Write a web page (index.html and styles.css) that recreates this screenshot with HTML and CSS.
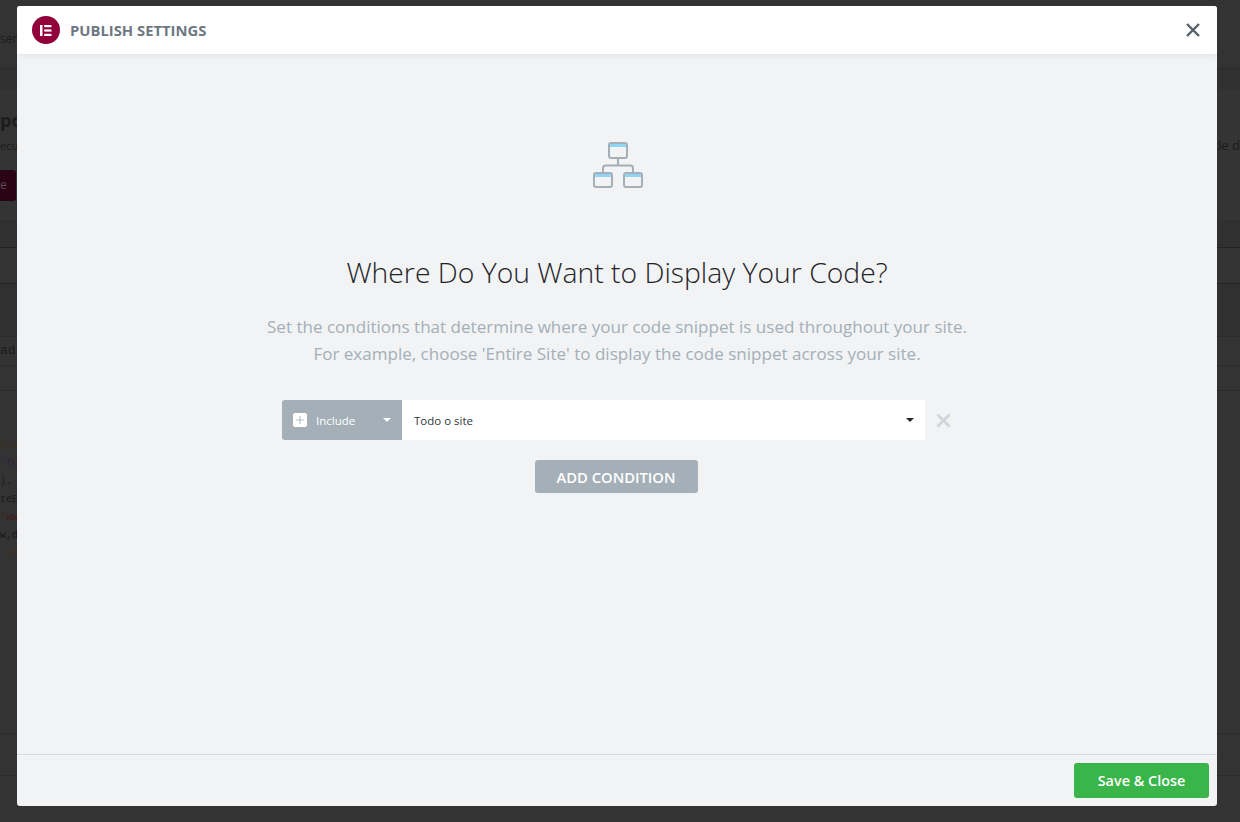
FILE: index.html
```html
<!DOCTYPE html>
<html lang="en">
<head>
  <meta charset="UTF-8" />
  <meta name="viewport" content="width=device-width, initial-scale=1.0" />
  <title>Publish Settings</title>
  <link rel="stylesheet" href="styles.css">
</head>
<body>
  <!-- dimmed page behind the modal -->
  <div class="page">
    <div class="row row-top"><span>ser</span></div>
    <div class="row row-band"></div>
    <div class="row row-intro">
      <div class="intro-left">
        <div class="intro-title">po</div>
        <div class="intro-text">ecu</div>
        <div class="intro-btn">e</div>
      </div>
      <div class="intro-right">de d</div>
    </div>
    <div class="row row-tab"></div>
    <div class="row row-plain"></div>
    <div class="row row-gap"></div>
    <div class="row row-input"><span>ad:</span></div>
    <div class="row row-small"></div>
    <div class="row row-code">
      <div class="code-line c-brown">gle</div>
      <div class="code-line c-purple">'fu</div>
      <div class="code-line c-plain">).</div>
      <div class="code-line c-plain">teE</div>
      <div class="code-line c-red">'ww</div>
      <div class="code-line c-dark">w,d</div>
      <div class="code-line c-brown">&nbsp;Go</div>
    </div>
    <div class="row row-foot"></div>
    <div class="row row-end"></div>
  </div>

  <div class="modal">
    <header class="modal-header">
      <div class="brand">
        <svg class="logo" viewBox="0 0 28 28" width="28" height="28">
          <circle cx="14" cy="14" r="14" fill="#92003b" />
          <rect x="8" y="9" width="2.5" height="11" fill="#fff" />
          <rect x="12.2" y="9" width="7.3" height="2.2" fill="#fff" />
          <rect x="12.2" y="13.4" width="7.3" height="2.2" fill="#fff" />
          <rect x="12.2" y="17.8" width="7.3" height="2.2" fill="#fff" />
        </svg>
        <span class="modal-title">PUBLISH SETTINGS</span>
      </div>
      <svg class="close" viewBox="0 0 14 14" width="14" height="14">
        <path d="M1 1 L13 13 M13 1 L1 13" stroke="#556068" stroke-width="2.400" fill="none" />
      </svg>
    </header>

    <main class="modal-body">
      <svg class="hero-icon" viewBox="0 0 50 46" width="50" height="46">
        <path d="M25 17 V23 M10 30 V26 Q10 23.500 12.500 23.500 H37.500 Q40 23.500 40 26 V30" stroke="#a4afb7" stroke-width="2" fill="none" />
        <rect x="16" y="1" width="18" height="15" rx="2" fill="#f1f3f5" stroke="#a4afb7" stroke-width="2" />
        <rect x="17" y="2" width="16" height="3" fill="#8fd6f4" />
        <rect x="1" y="31" width="18" height="14" rx="2" fill="#f1f3f5" stroke="#a4afb7" stroke-width="2" />
        <rect x="2" y="32" width="16" height="3" fill="#8fd6f4" />
        <rect x="31" y="31" width="18" height="14" rx="2" fill="#f1f3f5" stroke="#a4afb7" stroke-width="2" />
        <rect x="32" y="32" width="16" height="3" fill="#8fd6f4" />
      </svg>

      <h2 class="heading">Where Do You Want to Display Your Code?</h2>
      <p class="description">
        Set the conditions that determine where your code snippet is used throughout your site.<br>
        For example, choose 'Entire Site' to display the code snippet across your site.
      </p>

      <div class="condition">
        <div class="condition-type">
          <span class="plus-box">
            <svg viewBox="0 0 14 14" width="14" height="14">
              <path d="M7 3 V11 M3 7 H11" stroke="#b9c3cb" stroke-width="1.200" fill="none" />
            </svg>
          </span>
          <span class="type-label">Include</span>
          <span class="caret caret-white"></span>
        </div>
        <div class="condition-value">
          <span>Todo o site</span>
          <span class="caret caret-dark"></span>
        </div>
        <svg class="remove" viewBox="0 0 15 15" width="15" height="15">
          <path d="M1.500 1.500 L13.500 13.500 M13.500 1.500 L1.500 13.500" stroke="#cfd5da" stroke-width="2.800" fill="none" />
        </svg>
      </div>

      <button class="add-btn">ADD CONDITION</button>
    </main>

    <footer class="modal-footer">
      <button class="save-btn">Save &amp; Close</button>
    </footer>
  </div>
</body>
</html>
```

FILE: styles.css
```css
* {
  box-sizing: border-box;
}

body {
  margin: 0;
  height: 822px;
  overflow: hidden;
  background: #333;
  font-family: 'Open Sans', 'Noto Sans', sans-serif;
}

/* page behind the modal */
.page {
  height: 822px;
  display: flex;
  flex-direction: column;
  color: #1c1c1c;
  font-size: 12px;
}

.row {
  border-bottom: 1px solid #2b2b2b;
  flex: none;
}

.row-top {
  height: 69px;
  padding-top: 29px;
  line-height: 20px;
}

.row-band {
  height: 20px;
  background: #303030;
  border-bottom: none;
}

.row-intro {
  height: 131px;
  background: #343434;
  border-bottom: none;
  display: flex;
  justify-content: space-between;
}

.intro-title {
  margin-top: 21px;
  font-size: 18px;
  font-weight: 700;
  line-height: 20px;
}

.intro-text {
  margin-top: 7px;
  font-size: 11px;
  line-height: 18px;
}

.intro-btn {
  margin-top: 15px;
  width: 16px;
  height: 31px;
  background: #2a0314;
  border-radius: 0 3px 3px 0;
  color: #5a4a50;
  font-size: 12px;
  line-height: 30px;
}

.intro-right {
  margin-top: 47px;
  font-size: 13px;
  line-height: 18px;
}

.row-tab {
  height: 28px;
  background: #303030;
  border-bottom-color: #232323;
}

.row-plain {
  height: 36px;
  border-bottom-color: #232323;
}

.row-gap {
  height: 53px;
  background: #303030;
}

.row-input {
  height: 29px;
  line-height: 28px;
  font-size: 13px;
  font-family: 'Liberation Mono', monospace;
}

.row-small {
  height: 25px;
}

.row-code {
  height: 343px;
  padding-top: 46px;
  font-family: 'Liberation Mono', monospace;
  font-size: 10px;
}

.code-line {
  height: 18px;
  line-height: 18px;
}

.c-brown { color: #3f2f1c; }
.c-purple { color: #35223f; }
.c-plain { color: #1c1c1c; }
.c-red { color: #431a1a; }
.c-dark { color: #161616; }

.row-foot {
  height: 42px;
}

.row-end {
  flex: 1;
  border-bottom: none;
}

/* modal */
.modal {
  position: absolute;
  left: 17px;
  top: 6px;
  width: 1200px;
  height: 800px;
  display: flex;
  flex-direction: column;
  background: #f1f3f5;
  border-radius: 3px;
  overflow: hidden;
}

.modal-header {
  height: 48px;
  flex: none;
  background: #fff;
  box-shadow: 0 0 8px rgba(0, 0, 0, 0.1);
  display: flex;
  justify-content: space-between;
  align-items: center;
  padding: 0 17px 0 15px;
  position: relative;
}

.brand {
  display: flex;
  align-items: center;
  gap: 10px;
}

.logo {
  display: block;
}

.modal-title {
  font-size: 14.8px;
  font-weight: 700;
  color: #6d7882;
}

.close {
  display: block;
}

.modal-body {
  flex: 1;
  display: flex;
  flex-direction: column;
  align-items: center;
  padding-top: 88px;
}

.hero-icon {
  display: block;
  margin-left: 2px;
}

.heading {
  margin: 64px 0 0;
  font-size: 28.3px;
  font-weight: 300;
  line-height: 40px;
  color: #1f2327;
}

.description {
  margin: 21px 0 0;
  font-size: 17.05px;
  line-height: 27px;
  color: #a4afb7;
  text-align: center;
}

.condition {
  margin-top: 33px;
  margin-right: 1px;
  display: flex;
  align-items: center;
  height: 40px;
}

.condition-type {
  width: 120px;
  height: 40px;
  background: #a4afb7;
  border-radius: 3px 0 0 3px;
  display: flex;
  align-items: center;
  padding: 0 11px;
  color: #fff;
  font-size: 11.5px;
}

.plus-box {
  width: 14px;
  height: 14px;
  background: #fff;
  border-radius: 2px;
  margin-right: 9px;
}

.plus-box svg {
  display: block;
}

.type-label {
  flex: 1;
}

.caret {
  width: 0;
  height: 0;
  border-left: 4.500px solid transparent;
  border-right: 4.500px solid transparent;
  border-top: 4.500px solid #fff;
}

.caret-dark {
  border-top-color: #23282d;
}

.condition-value {
  width: 523px;
  height: 40px;
  background: #fff;
  display: flex;
  justify-content: space-between;
  align-items: center;
  padding: 0 11px 0 12px;
  font-size: 11.5px;
  color: #32373c;
}

.remove {
  display: block;
  margin-left: 11px;
}

.add-btn {
  margin-top: 20px;
  margin-right: 2px;
  width: 163px;
  height: 33px;
  border: none;
  border-radius: 3px;
  background: #a4afb7;
  color: #fff;
  font-family: inherit;
  font-size: 14.75px;
  font-weight: 600;
}

.modal-footer {
  height: 52px;
  flex: none;
  border-top: 1px solid #d5dadf;
  display: flex;
  justify-content: flex-end;
  padding: 8px 8px 0 0;
}

.save-btn {
  width: 135px;
  height: 35px;
  border: none;
  border-radius: 3px;
  background: #39b54a;
  color: #fff;
  font-family: inherit;
  font-size: 14.4px;
  font-weight: 600;
}
```
